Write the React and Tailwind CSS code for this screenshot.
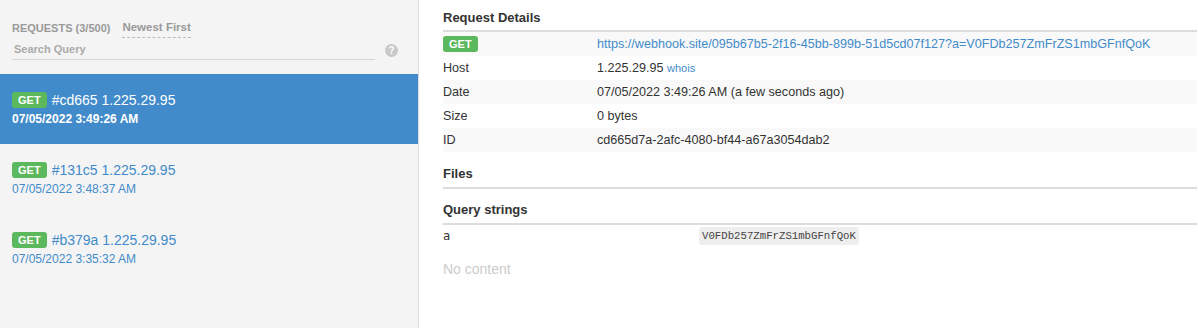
const requests = [
  { id: "#cd665", ip: "1.225.29.95", date: "07/05/2022 3:49:26 AM", active: true },
  { id: "#131c5", ip: "1.225.29.95", date: "07/05/2022 3:48:37 AM" },
  { id: "#b379a", ip: "1.225.29.95", date: "07/05/2022 3:35:32 AM" },
];

function GetBadge({ className = "" }) {
  return (
    <span
      className={`inline-flex items-center justify-center rounded-[3px] bg-[#5cb85c] px-[6px] text-[11px] font-bold leading-[16px] text-white ${className}`}
    >
      GET
    </span>
  );
}

function Sidebar() {
  return (
    <div className="flex h-[328px] w-[419px] shrink-0 flex-col border-r border-[#dddddd] bg-[#f4f4f4]">
      <div className="px-[12px] pt-[19px]">
        <div className="flex items-center gap-[12px] text-[11px] font-bold text-[#999999]">
          <span>REQUESTS (3/500)</span>
          <span className="border-b border-dashed border-[#bbbbbb] pb-[1px] text-[11.5px]">Newest First</span>
        </div>
        <div className="mt-[3px] flex items-center">
          <div className="w-[363px] border-b border-[#d5d5d5] px-[2px] pb-[1px] text-[11px] font-bold text-[#aaaaaa]">
            Search Query
          </div>
          <span className="ml-[10px] flex h-[13px] w-[13px] items-center justify-center rounded-full bg-[#c8c8c8] text-[10px] font-bold leading-none text-white">
            ?
          </span>
        </div>
      </div>
      <div className="mt-[14px]">
        {requests.map((r) => (
          <div
            key={r.id}
            className={`h-[70px] px-[12px] pt-[18px] ${r.active ? "bg-[#428bca] text-white" : "text-[#428bca]"}`}
          >
            <div className="flex items-center">
              <GetBadge />
              <span className="ml-[5px] text-[14px] leading-[16px]">
                {r.id} {r.ip}
              </span>
            </div>
            <div className={`mt-[4px] text-[12px] leading-[14px] ${r.active ? "font-bold" : ""}`}>{r.date}</div>
          </div>
        ))}
      </div>
    </div>
  );
}

function Row({ label, children, striped }) {
  return (
    <div className={`flex h-[24px] items-center text-[12.6px] text-[#333333] ${striped ? "bg-[#f9f9f9]" : ""}`}>
      <div className="w-[154px] shrink-0">{label}</div>
      <div className="whitespace-nowrap">{children}</div>
    </div>
  );
}

function Details() {
  return (
    <div className="min-w-0 flex-1 pl-[24px] pr-[1px] pt-[9px]">
      <h3 className="text-[13px] font-bold leading-[17px] text-[#333333]">Request Details</h3>
      <div className="mt-[4px] border-t-2 border-[#dddddd]">
        <Row striped label={<GetBadge className="leading-[14px]" />}>
          <span className="text-[#428bca]">
            https://webhook.site/095b67b5-2f16-45bb-899b-51d5cd07f127?a=V0FDb257ZmFrZS1mbGFnfQoK
          </span>
        </Row>
        <Row label="Host">
          1.225.29.95 <span className="text-[11px] text-[#428bca]">whois</span>
        </Row>
        <Row striped label="Date">07/05/2022 3:49:26 AM (a few seconds ago)</Row>
        <Row label="Size">0 bytes</Row>
        <Row striped label="ID">cd665d7a-2afc-4080-bf44-a67a3054dab2</Row>
      </div>

      <h3 className="mt-[13px] pb-[5px] text-[13px] font-bold leading-[17px] text-[#333333]">Files</h3>
      <div className="border-t-2 border-[#dddddd]" />

      <h3 className="mt-[12px] pb-[5px] text-[13px] font-bold leading-[17px] text-[#333333]">Query strings</h3>
      <div className="flex h-[24px] items-center border-t-2 border-[#dddddd] font-['DejaVu_Sans_Mono',monospace] text-[12px] text-[#333333]">
        <div className="w-[256px] shrink-0">a</div>
        <code className="rounded-[3px] bg-[#eeeeee] px-[3px] py-[1px] text-[10.7px] text-[#444444]">
          V0FDb257ZmFrZS1mbGFnfQoK
        </code>
      </div>
      <div className="mt-[12px] text-[14px] text-[#cccccc]">No content</div>
    </div>
  );
}

export default function App() {
  return (
    <div className="flex h-[328px] w-[1198px] overflow-hidden bg-white font-['Liberation_Sans',Arial,sans-serif]">
      <Sidebar />
      <Details />
    </div>
  );
}
